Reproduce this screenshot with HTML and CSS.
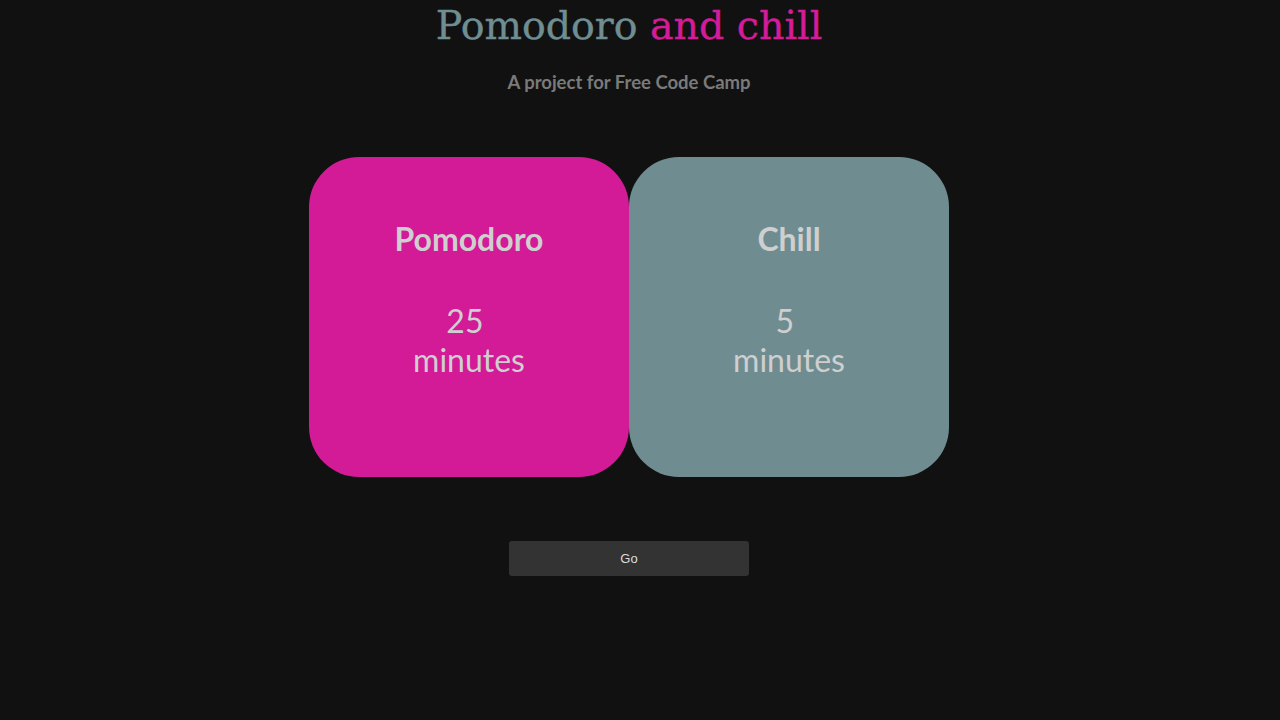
FILE: index.html
```html
<!DOCTYPE html>
<html lang="en">
<head>
<meta charset="utf-8">
<title>Pomodoro and chill</title>
<link rel="stylesheet" href="styles.css">
</head>
<body>
  <header class="header">
    <h1 class="title"><span class="title-a">Pomodoro</span> <span class="title-b">and chill</span></h1>
    <p class="subtitle">A project for Free Code Camp</p>
  </header>
  <main class="cards">
    <section class="card card-pomodoro">
      <h2 class="card-title">Pomodoro</h2>
      <p class="card-time">25&nbsp;<br>minutes</p>
    </section>
    <section class="card card-chill">
      <h2 class="card-title">Chill</h2>
      <p class="card-time">5&nbsp;<br>minutes</p>
    </section>
  </main>
  <div class="actions">
    <button class="go-btn" type="button">Go</button>
  </div>
</body>
</html>
```
FILE: styles.css
```css
html, body {
  margin: 0;
  padding: 0;
}
body {
  background: #111111;
  color: #cccccc;
  font-family: Lato, "Open Sans", sans-serif;
  text-align: center;
  padding-right: 22px;
}
.header {
  display: flex;
  flex-direction: column;
  align-items: center;
}
.title {
  margin: 0;
  font-family: "DejaVu Serif", serif;
  font-weight: normal;
  font-size: 39.5px;
  line-height: 50px;
  white-space: nowrap;
  -webkit-text-stroke: 0.4px currentColor;
}
.title-a { color: #6f8e91; }
.title-b { color: #d41b98; }
.subtitle {
  margin: 21px 0 0;
  font-size: 18.5px;
  font-weight: bold;
  line-height: 22px;
  color: #7a7a7a;
}
.cards {
  display: flex;
  justify-content: center;
  margin-top: 64px;
}
.card {
  width: 320px;
  height: 320px;
  box-sizing: border-box;
  border-radius: 50px;
  padding-top: 61px;
  display: flex;
  flex-direction: column;
  align-items: center;
  color: #cfcfcf;
}
.card-pomodoro { background: #d31a97; }
.card-chill { background: #6f8d90; }
.card-title {
  margin: 0;
  font-size: 32px;
  font-weight: bold;
  line-height: 41px;
}
.card-time {
  margin: 42px 0 0;
  font-size: 32px;
  line-height: 39px;
}
.actions {
  display: flex;
  justify-content: center;
  margin-top: 64px;
}
.go-btn {
  width: 240px;
  height: 35px;
  border: none;
  border-radius: 3px;
  background: #333333;
  color: #dddddd;
  font-family: "Liberation Sans", Arial, sans-serif;
  font-size: 13px;
  padding: 0;
}
```
